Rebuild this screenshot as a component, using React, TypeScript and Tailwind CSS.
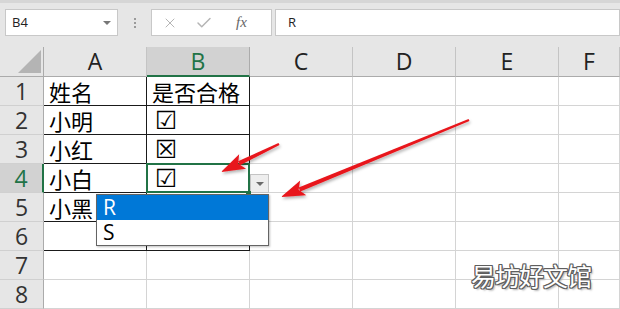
import React from 'react';
import { X, Check } from 'lucide-react';

const cols = ['A', 'B', 'C', 'D', 'E', 'F'];
const widths = ['w-[103px]', 'w-[103px]', 'w-[103px]', 'w-[103px]', 'w-[103px]', 'w-[61px]'];

const rows: { n: number; a?: string; b?: string }[] = [
  { n: 1, a: '姓名', b: '是否合格' },
  { n: 2, a: '小明', b: '☑' },
  { n: 3, a: '小红', b: '☒' },
  { n: 4, a: '小白', b: '☑' },
  { n: 5, a: '小黑', b: '' },
  { n: 6, a: '', b: '' },
  { n: 7 },
  { n: 8 },
];

const cjk = "font-['Noto_Sans_CJK_SC',sans-serif]";
const latin = "font-['Open_Sans','Liberation_Sans',sans-serif]";

function arrow(tx: number, ty: number, hx: number, hy: number) {
  const dx = hx - tx;
  const dy = hy - ty;
  const len = Math.hypot(dx, dy);
  const ux = dx / len;
  const uy = dy / len;
  const nx = -uy;
  const ny = ux;
  const hl = 24;
  const hw = 8;
  const bx = hx - ux * hl;
  const by = hy - uy * hl;
  const body = [
    [tx + nx * 1.2, ty + ny * 1.2],
    [bx + ux * 4 + nx * 2.2, by + uy * 4 + ny * 2.2],
    [bx + ux * 4 - nx * 2.2, by + uy * 4 - ny * 2.2],
    [tx - nx * 1.2, ty - ny * 1.2],
  ];
  const head = [
    [hx, hy],
    [bx + nx * hw, by + ny * hw],
    [bx + ux * 5, by + uy * 5],
    [bx - nx * hw, by - ny * hw],
  ];
  const pts = (p: number[][]) => p.map((q) => q.join(',')).join(' ');
  return (
    <g>
      <polygon points={pts(body)} fill="#e8151b" />
      <polygon points={pts(head)} fill="#e8151b" />
    </g>
  );
}

export default function App() {
  return (
    <div className="relative w-[620px] h-[309px] overflow-hidden bg-white">
      {/* formula bar */}
      <div className="h-[47px] bg-[#e6e6e6] border-t-[3px] border-[#d6d6d6] flex items-start pt-[6px] pl-[5px] gap-0">
        <div className={`w-[113px] h-[27px] bg-white border border-[#c8c8c8] flex items-center justify-between pl-[6px] pr-[6px] text-[13px] text-[#222] ${latin}`}>
          <span>B4</span>
          <span className="w-0 h-0 border-l-[4px] border-r-[4px] border-t-[4px] border-l-transparent border-r-transparent border-t-[#777]" />
        </div>
        <div className="w-[33px] h-[27px] flex flex-col items-center justify-center gap-[2px]">
          <span className="w-[2px] h-[2px] bg-[#9a9a9a]" />
          <span className="w-[2px] h-[2px] bg-[#9a9a9a]" />
          <span className="w-[2px] h-[2px] bg-[#9a9a9a]" />
        </div>
        <div className="w-[121px] h-[27px] bg-white border border-[#c8c8c8] flex items-center pl-[10px] gap-[17px]">
          <X size={16} strokeWidth={1.5} className="text-[#b5b5b5]" />
          <Check size={18} strokeWidth={2} className="text-[#b5b5b5]" />
          <span className="ml-[6px] text-[15px] italic text-[#666] font-['Liberation_Serif',serif]">fx</span>
        </div>
        <div className={`ml-[3px] flex-1 h-[27px] bg-white border border-[#c8c8c8] flex items-center pl-[12px] text-[13px] text-[#222] ${latin}`}>
          R
        </div>
      </div>

      {/* column headers */}
      <div className="flex h-[30px] bg-[#e6e6e6]">
        <div className="w-[44px] h-full shrink-0 border-r border-b border-[#ababab] flex items-end justify-end pr-[2px] pb-[3px]">
          <div className="w-[23px] h-[23px] shrink-0 bg-[#b4b4b4] [clip-path:polygon(100%_0,100%_100%,0_100%)]" />
        </div>
        {cols.map((c, i) => (
          <div
            key={c}
            className={`${widths[i]} h-full flex items-center justify-center text-[23px] ${latin} ${
              c === 'B'
                ? 'bg-[#d2d2d2] text-[#217346] border-r border-[#ababab] border-b-2 border-b-[#217346]'
                : 'text-[#222] border-r border-b border-[#c4c4c4] border-b-[#ababab]'
            }`}
          >
            {c}
          </div>
        ))}
      </div>

      {/* rows */}
      {rows.map((r) => {
        const inTable = r.n <= 6;
        const active = r.n === 4;
        return (
          <div key={r.n} className="flex h-[29px]">
            <div
              className={`w-[44px] h-full flex items-center justify-center text-[23px] ${latin} border-b border-[#d0d0d0] ${
                active
                  ? 'bg-[#d2d2d2] text-[#217346] border-r-2 border-r-[#217346]'
                  : 'bg-[#e6e6e6] text-[#333] border-r border-r-[#ababab]'
              }`}
            >
              {r.n}
            </div>
            <div
              className={`w-[103px] h-full flex items-end pl-[5px] text-[22px] leading-[28px] text-black ${cjk} border-r border-b ${
                inTable ? 'border-[#1a1a1a]' : 'border-[#d4d4d4]'
              }`}
            >
              {r.a}
            </div>
            <div
              className={`relative w-[103px] h-full flex items-end text-black border-r border-b ${
                inTable ? 'border-[#1a1a1a]' : 'border-[#d4d4d4]'
              } ${
                r.n === 1
                  ? `pl-[5px] text-[22px] leading-[28px] ${cjk}`
                  : "pl-[8px] text-[25px] leading-[27px] font-['DejaVu_Sans',sans-serif]"
              }`}
            >
              {r.b}
              {active && (
                <div className="absolute -left-px -top-px w-[104px] h-[30px] border-2 border-[#217346]" />
              )}
            </div>
            {cols.slice(2).map((c, i) => (
              <div key={c} className={`${widths[i + 2]} h-full border-r border-b border-[#d4d4d4]`} />
            ))}
          </div>
        );
      })}

      {/* data validation dropdown button */}
      <div className="absolute left-[250px] top-[174px] w-[19px] h-[19px] bg-[#eeeeee] border border-[#c4c4c4] flex items-center justify-center">
        <span className="w-0 h-0 border-l-[4px] border-r-[4px] border-t-[4px] border-l-transparent border-r-transparent border-t-[#6a6a6a]" />
      </div>
      <div className="absolute left-[246px] top-[191px] w-[5px] h-[4px] bg-[#217346]" />

      {/* dropdown list */}
      <div className={`absolute left-[96px] top-[194px] w-[173px] h-[52px] bg-white border border-[#646464] shadow-[1px_1px_2px_rgba(0,0,0,0.25)] text-[21px] leading-none ${latin}`}>
        <div className="h-[25px] bg-[#0078d7] text-white flex items-center pl-[6px]">R</div>
        <div className="h-[25px] text-black flex items-center pl-[6px]">S</div>
      </div>

      {/* red arrows */}
      <svg className="absolute inset-0 pointer-events-none" width="620" height="309">
        <defs>
          <filter id="sh" x="-20%" y="-20%" width="140%" height="140%">
            <feDropShadow dx="1" dy="2" stdDeviation="1.5" floodColor="#000" floodOpacity="0.3" />
          </filter>
        </defs>
        <g filter="url(#sh)">
          {arrow(279, 144, 221, 172)}
          {arrow(469, 120, 281, 197)}
        </g>
      </svg>

      {/* watermark */}
      <div
        className={`absolute left-[471px] top-[257px] text-[25px] tracking-[-1px] text-white ${cjk} [text-shadow:1px_0_#5e5e5e,-1px_0_#5e5e5e,0_1px_#5e5e5e,0_-1px_#5e5e5e,1px_1px_#5e5e5e,-1px_-1px_#5e5e5e,1px_-1px_#5e5e5e,-1px_1px_#5e5e5e,2px_2px_2px_#aaa]`}
      >
        易坊好文馆
      </div>
    </div>
  );
}
